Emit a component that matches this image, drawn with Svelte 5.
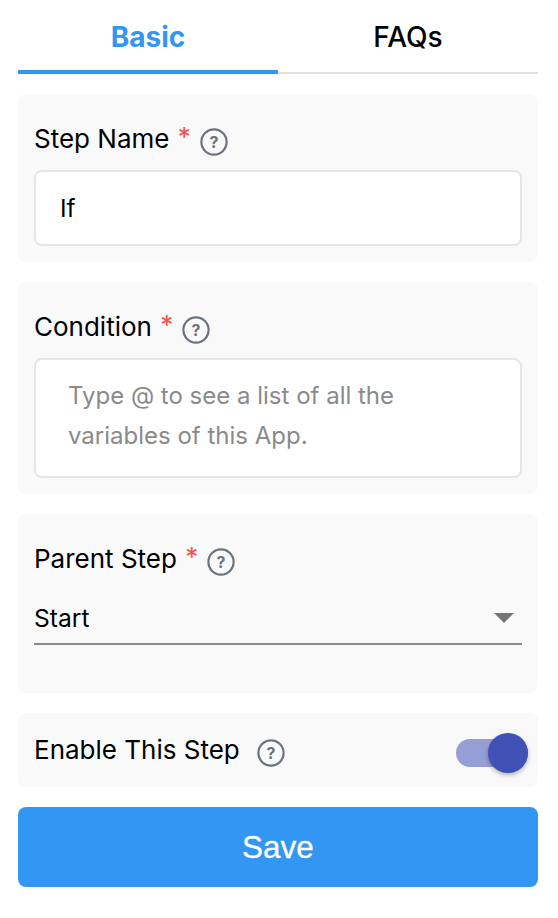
<script>
	let enabled = $state(true);
	let tab = $state('basic');
</script>

{#snippet help()}
	<svg class="help" width="28" height="28" viewBox="0 0 28 28" aria-hidden="true">
		<circle cx="14" cy="14" r="12.6" fill="none" stroke="#6b7280" stroke-width="2.2" />
		<text x="14" y="20" text-anchor="middle" class="help_mark">?</text>
	</svg>
{/snippet}

<div class="page">
	<div class="tabs">
		<button class="tab" class:active={tab === 'basic'} onclick={() => (tab = 'basic')}>Basic</button>
		<button class="tab" class:active={tab === 'faqs'} onclick={() => (tab = 'faqs')}>FAQs</button>
	</div>

	<section class="card name_card">
		<div class="label">Step Name <span class="req">*</span>{@render help()}</div>
		<input class="field" value="If" />
	</section>

	<section class="card condition_card">
		<div class="label">Condition <span class="req">*</span>{@render help()}</div>
		<textarea class="field area" placeholder="Type @ to see a list of all the variables of this App."></textarea>
	</section>

	<section class="card parent_card">
		<div class="label">Parent Step <span class="req">*</span>{@render help()}</div>
		<div class="select">
			<span>Start</span>
			<i class="caret"></i>
		</div>
	</section>

	<section class="card enable_card">
		<div class="label">Enable This Step {@render help()}</div>
		<button class="switch" class:on={enabled} aria-label="Enable This Step" onclick={() => (enabled = !enabled)}>
			<i class="thumb"></i>
		</button>
	</section>

	<button class="save">Save</button>
</div>

<style>
	:global(body) {
		background: #fff;
	}

	.page {
		width: 520px;
		padding: 0 20px 31px 18px;
		font-family: Inter, 'Liberation Sans', sans-serif;
		color: #000;
		display: flex;
		flex-direction: column;
		gap: 20px;
	}

	.tabs {
		display: flex;
		height: 74px;
		box-sizing: border-box;
		border-bottom: 2px solid #e0e0e0;
	}

	.tab {
		flex: 1;
		height: 74px;
		padding: 4px 0 0;
		background: none;
		border: none;
		border-bottom: 4px solid transparent;
		font: 500 28px Inter, 'Liberation Sans', sans-serif;
		color: #000;
	}

	.tab.active {
		color: #3296f3;
		font-weight: 700;
		border-bottom-color: #3296f3;
	}

	.card {
		background: #f9f9f9;
		border-radius: 8px;
		padding: 0 16px;
		box-sizing: border-box;
	}

	.name_card {
		height: 168px;
		padding-top: 28px;
	}

	.condition_card {
		height: 212px;
		padding-top: 28px;
	}

	.parent_card {
		height: 179px;
		padding-top: 28px;
	}

	.enable_card {
		height: 74px;
		display: flex;
		align-items: center;
		justify-content: space-between;
		padding-right: 10px;
	}

	.label {
		display: flex;
		align-items: center;
		font-size: 26px;
		line-height: 34px;
		white-space: pre;
	}

	.req {
		color: #fb4d4d;
		margin-left: 1px;
		margin-top: -4px;
	}

	.help {
		margin-left: 9px;
		margin-top: 6px;
		flex: none;
	}

	.enable_card .label {
		margin-top: -1px;
	}

	.enable_card .help {
		margin-left: 10px;
	}

	.help_mark {
		font: 700 16px Inter, sans-serif;
		fill: #6b7280;
	}

	.field {
		display: block;
		width: 100%;
		box-sizing: border-box;
		margin-top: 14px;
		height: 76px;
		padding: 0 24px;
		background: #fff;
		border: 2px solid #e6e6e6;
		border-radius: 8px;
		font: 400 24.5px Inter, 'Liberation Sans', sans-serif;
		color: #000;
		outline: none;
	}

	.area {
		height: 120px;
		padding: 16px 32px;
		font-size: 24px;
		line-height: 40px;
		resize: none;
		overflow: hidden;
	}

	.area::placeholder {
		color: #8a8a8a;
		opacity: 1;
	}

	.select {
		display: flex;
		align-items: center;
		justify-content: space-between;
		height: 53px;
		margin-top: 16px;
		box-sizing: border-box;
		padding-right: 8px;
		border-bottom: 2px solid #8c8c8c;
		font-size: 24.6px;
	}

	.caret {
		width: 0;
		height: 0;
		border-left: 10px solid transparent;
		border-right: 10px solid transparent;
		border-top: 10px solid #757575;
	}

	.switch {
		position: relative;
		width: 72px;
		height: 28px;
		margin-top: 6px;
		padding: 0;
		border: none;
		border-radius: 14px;
		background: #959fd6;
	}

	.thumb {
		position: absolute;
		right: 0;
		top: -6px;
		width: 40px;
		height: 40px;
		border-radius: 50%;
		background: #3f51b5;
		box-shadow: 0 2px 4px rgba(0, 0, 0, 0.3);
	}

	.save {
		height: 80px;
		background: #3296f3;
		border: none;
		border-radius: 8px;
		color: #fff;
		font: 500 31.5px 'Liberation Sans', Arial, sans-serif;
		-webkit-text-stroke: 0.3px #fff;
	}
</style>
